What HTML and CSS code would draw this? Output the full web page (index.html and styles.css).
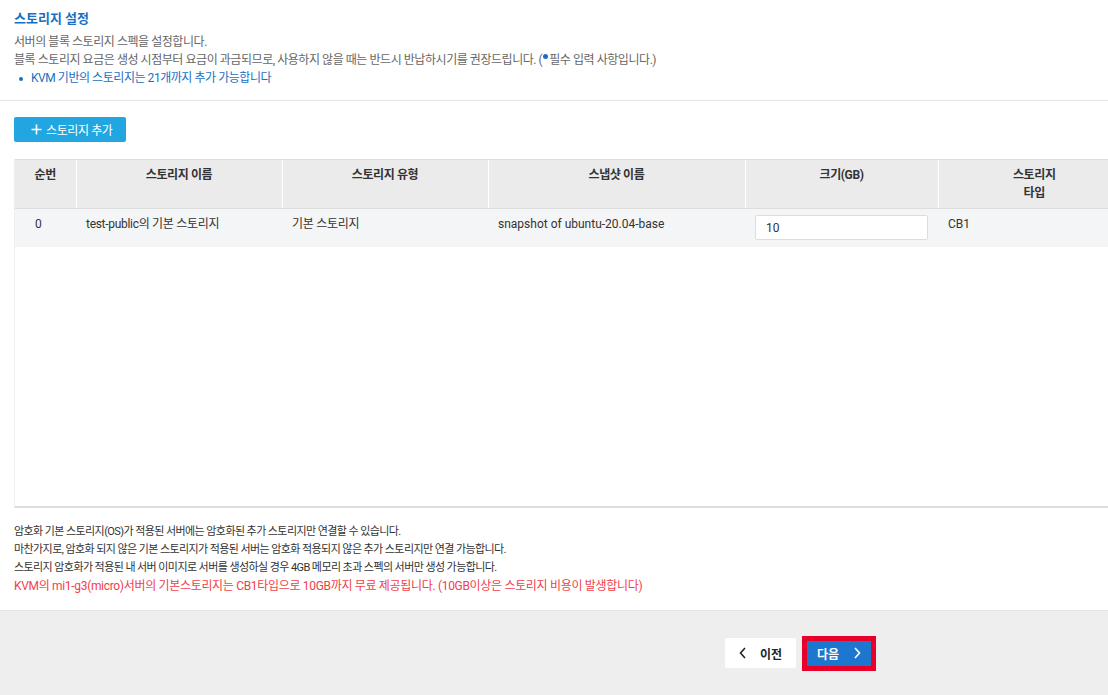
FILE: index.html
```html
<!DOCTYPE html>
<html lang="ko">
<head>
  <meta charset="UTF-8">
  <meta name="viewport" content="width=device-width, initial-scale=1.0">
  <title>스토리지 설정</title>
  <link rel="stylesheet" href="styles.css">
</head>
<body>
  <div class="page">
    <div class="section-header">
      <h2 class="section-title">스토리지 설정</h2>
      <p class="desc">서버의 블록 스토리지 스펙을 설정합니다.</p>
      <p class="desc">블록 스토리지 요금은 생성 시점부터 요금이 과금되므로, 사용하지 않을 때는 반드시 반납하시기를 권장드립니다. (<span class="req-dot"></span>필수 입력 사항입니다.)</p>
      <ul class="notice-list">
        <li>KVM 기반의 스토리지는 21개까지 추가 가능합니다</li>
      </ul>
    </div>

    <div class="section-body">
      <button class="btn-add" type="button">
        <svg width="11" height="11" viewBox="0 0 11 11"><path d="M5.5 0.5v10M0.5 5.5h10" stroke="#fff" stroke-width="1.6" fill="none"/></svg>
        스토리지 추가
      </button>

      <div class="table-wrap">
        <table class="storage-table">
          <colgroup>
            <col style="width:61px">
            <col style="width:206px">
            <col style="width:206px">
            <col style="width:257px">
            <col style="width:193px">
            <col style="width:192px">
          </colgroup>
          <thead>
            <tr>
              <th>순번</th>
              <th>스토리지 이름</th>
              <th>스토리지 유형</th>
              <th>스냅샷 이름</th>
              <th>크기(GB)</th>
              <th>스토리지<br>타입</th>
            </tr>
          </thead>
          <tbody>
            <tr>
              <td class="col-no">0</td>
              <td class="ko">test-public의 기본 스토리지</td>
              <td class="ko">기본 스토리지</td>
              <td>snapshot of ubuntu-20.04-base</td>
              <td><input class="size-input" type="text" value="10"></td>
              <td>CB1</td>
            </tr>
          </tbody>
        </table>
      </div>

      <div class="notes">
        <p>암호화 기본 스토리지(OS)가 적용된 서버에는 암호화된 추가 스토리지만 연결할 수 있습니다.</p>
        <p>마찬가지로, 암호화 되지 않은 기본 스토리지가 적용된 서버는 암호화 적용되지 않은 추가 스토리지만 연결 가능합니다.</p>
        <p>스토리지 암호화가 적용된 내 서버 이미지로 서버를 생성하실 경우 4GB 메모리 초과 스펙의 서버만 생성 가능합니다.</p>
        <p class="warn">KVM의 mi1-g3(micro)서버의 기본스토리지는 CB1타입으로 10GB까지 무료 제공됩니다. (10GB이상은 스토리지 비용이 발생합니다)</p>
      </div>
    </div>

    <div class="footer">
      <button class="btn-prev" type="button">
        <svg width="8" height="12" viewBox="0 0 8 12"><path d="M6 1L1.5 6L6 11" stroke="#222" stroke-width="1.6" fill="none"/></svg>
        이전
      </button>
      <button class="btn-next" type="button">
        다음
        <svg width="8" height="12" viewBox="0 0 8 12"><path d="M2 1L6.5 6L2 11" stroke="#fff" stroke-width="1.6" fill="none"/></svg>
      </button>
    </div>
  </div>
</body>
</html>
```

FILE: styles.css
```css
* {
  margin: 0;
  padding: 0;
  box-sizing: border-box;
}

body {
  width: 1108px;
  height: 695px;
  font-family: Roboto, "Noto Sans CJK KR", sans-serif;
  background: #ffffff;
  color: #333333;
  overflow: hidden;
}

.page {
  display: flex;
  flex-direction: column;
  height: 695px;
}

.section-header {
  padding: 9px 14px 13px;
  border-bottom: 1px solid #e6e6e6;
}

.section-title {
  font-size: 13px;
  font-weight: 700;
  line-height: 20px;
  color: #1a6fc4;
  margin-bottom: 4px;
}

.desc {
  font-size: 12px;
  line-height: 18px;
  color: #666666;
  letter-spacing: -0.45px;
}

.req-dot {
  display: inline-block;
  width: 5px;
  height: 5px;
  border-radius: 50%;
  background: #1a6fc4;
  vertical-align: 5px;
  margin: 0 1px;
}

.notice-list {
  list-style: none;
}

.notice-list li {
  font-size: 12px;
  line-height: 18px;
  color: #1a6fc4;
  padding-left: 17px;
  position: relative;
  letter-spacing: -0.45px;
}

.notice-list li::before {
  content: '';
  position: absolute;
  left: 5px;
  top: 8px;
  width: 4px;
  height: 4px;
  border-radius: 50%;
  background: #1a6fc4;
}

.section-body {
  padding: 16px 0 0 14px;
  flex: 1;
}

.btn-add {
  display: flex;
  align-items: center;
  gap: 4px;
  height: 25px;
  padding: 0 14px 0 17px;
  background: #22a6e2;
  border: none;
  border-radius: 2px;
  color: #ffffff;
  font-family: inherit;
  font-size: 12px;
  letter-spacing: -0.4px;
}

.table-wrap {
  margin-top: 17px;
  width: 1094px;
  height: 349px;
  overflow: hidden;
  border-left: 1px solid #eeeeee;
  border-bottom: 2px solid #dddddd;
}

.storage-table {
  width: 1115px;
  table-layout: fixed;
  border-collapse: collapse;
  font-size: 12px;
}

.storage-table th {
  height: 49px;
  padding: 6px 10px;
  vertical-align: top;
  background: #ebebeb;
  border-top: 1px solid #dedede;
  border-bottom: 1px solid #dddddd;
  border-left: 1px solid #ffffff;
  font-weight: 700;
  line-height: 18px;
  color: #333333;
  letter-spacing: -0.4px;
}

.storage-table th:first-child {
  border-left: none;
}

.storage-table td {
  height: 38px;
  padding: 6px 10px 7px;
  vertical-align: top;
  background: #f4f5f7;
  line-height: 18px;
  color: #333333;
}

.storage-table td.ko {
  letter-spacing: -0.3px;
}

.storage-table td.col-no {
  padding-left: 20px;
}

.size-input {
  display: block;
  width: 173px;
  height: 25px;
  padding: 0 10px;
  border: 1px solid #dddddd;
  border-radius: 2px;
  background: #ffffff;
  font-family: inherit;
  font-size: 12px;
  color: #333333;
}

.notes {
  padding-top: 15px;
}

.notes p {
  font-size: 11px;
  line-height: 18px;
  color: #333333;
  letter-spacing: -0.58px;
}

.notes p.warn {
  font-size: 12px;
  color: #f2404a;
  letter-spacing: -0.32px;
}

.footer {
  height: 85px;
  background: #eeeeee;
  border-top: 1px solid #e6e6e6;
  display: flex;
  align-items: center;
  justify-content: flex-end;
  gap: 6px;
  padding: 0 232px 0 0;
}

.btn-prev {
  display: flex;
  align-items: center;
  justify-content: center;
  gap: 13px;
  width: 71px;
  height: 30px;
  background: #ffffff;
  border: none;
  border-radius: 2px;
  color: #222222;
  font-family: inherit;
  font-size: 12px;
  font-weight: 700;
}

.btn-next {
  display: flex;
  align-items: center;
  justify-content: center;
  gap: 14px;
  width: 74px;
  height: 35px;
  background: #1e77cf;
  border: 5px solid #e8002b;
  color: #ffffff;
  font-family: inherit;
  font-size: 12px;
  font-weight: 700;
}
```
